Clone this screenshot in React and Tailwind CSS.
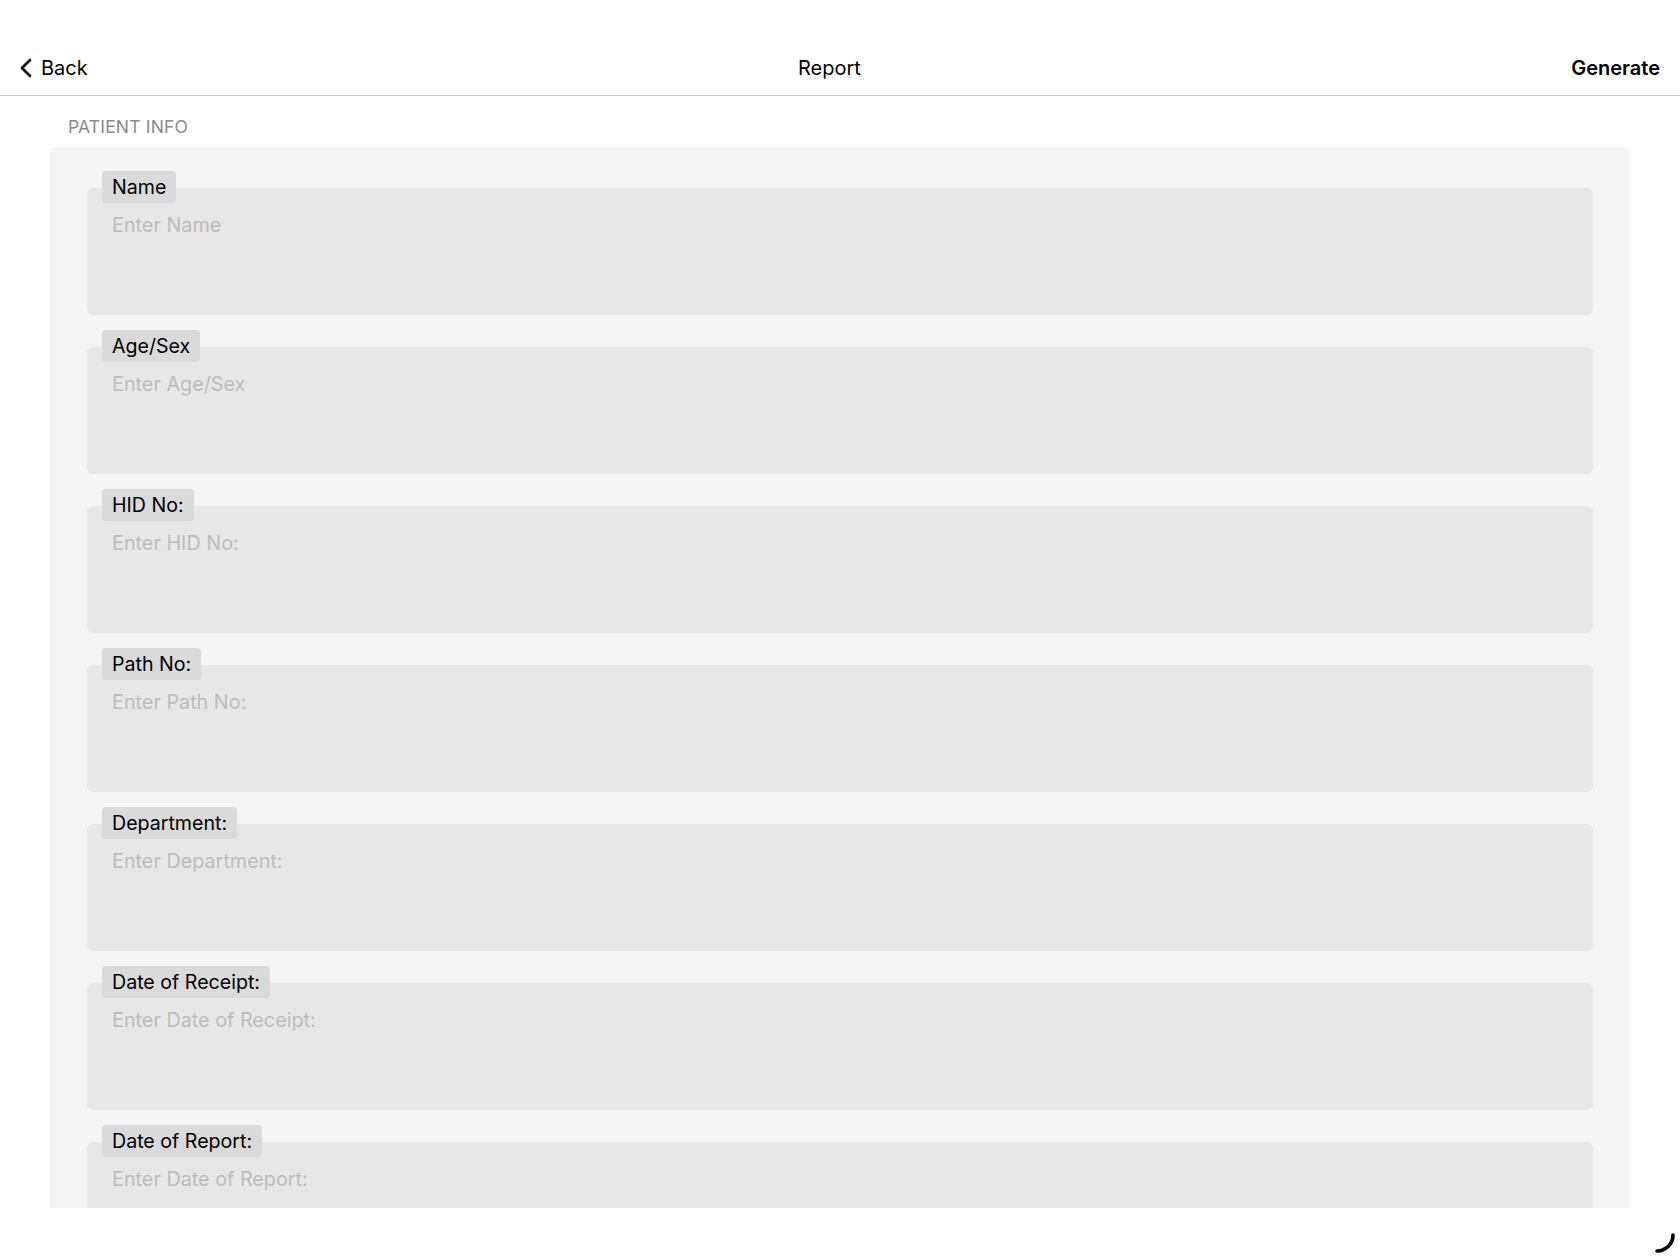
import React from 'react';

const fields = [
    'Name',
    'Age/Sex',
    'HID No:',
    'Path No:',
    'Department:',
    'Date of Receipt:',
    'Date of Report:',
];

// One labelled multi-line input; the label chip sits over the box's top edge
const Field = ({ label }) => (
    <div className="relative pt-[17px]">
        <span className="absolute left-[15px] top-0 z-10 h-[32px] px-[10px] rounded-[4px] bg-[#dadada] text-[19.6px] leading-[32px] text-black">
            {label}
        </span>
        <textarea
            placeholder={`Enter ${label}`}
            className="block w-full h-[127px] resize-none rounded-[6px] bg-[#e7e7e7] pl-[25px] pr-4 pt-[23px] text-[19.8px] leading-[28px] text-black placeholder:text-[#bcbcbc] outline-none font-['Inter',sans-serif]"
        />
    </div>
);

export default function App() {
    return (
        <div className="w-[1680px] h-[1259px] bg-white overflow-hidden font-['Inter',sans-serif]">
            {/* Navigation bar */}
            <header className="pt-[40px] h-[96px] border-b border-[#c8c8ca]">
                <div className="h-[55px] px-[20px] flex items-center justify-between">
                    <button className="flex items-center gap-[9px] text-[20px] text-black">
                        <svg width="12" height="20" viewBox="0 0 12 20" fill="none">
                            <path d="M10 2 L2 10 L10 18" stroke="black" strokeWidth="2.6" strokeLinecap="round" strokeLinejoin="round" />
                        </svg>
                        Back
                    </button>
                    <h1 className="text-[20px] text-black">Report</h1>
                    <button className="text-[20px] font-semibold text-black">Generate</button>
                </div>
            </header>

            {/* Scrolling form */}
            <div className="h-[1112px] overflow-hidden">
                <div className="pt-[21px] pl-[68px] text-[17.5px] leading-[20px] text-[#8a8a8a] tracking-[0.01em]">
                    PATIENT INFO
                </div>
                <div className="mt-[10px] mx-[49px] w-[1581px] rounded-[8px] bg-[#f5f5f5] pt-[24px] pl-[38px] pr-[37px] pb-8">
                    <div className="flex flex-col gap-[15px]">
                        {fields.map((f) => (
                            <Field key={f} label={f} />
                        ))}
                    </div>
                </div>
            </div>

            {/* Activity indicator */}
            <div className="h-[51px] flex items-end justify-end pr-[2px] pb-[1px]">
                <svg width="30" height="30" viewBox="0 0 30 30" fill="none">
                    <path d="M25 7 A16 16 0 0 1 9 23" stroke="black" strokeWidth="3.6" strokeLinecap="round" />
                </svg>
            </div>
        </div>
    );
}
